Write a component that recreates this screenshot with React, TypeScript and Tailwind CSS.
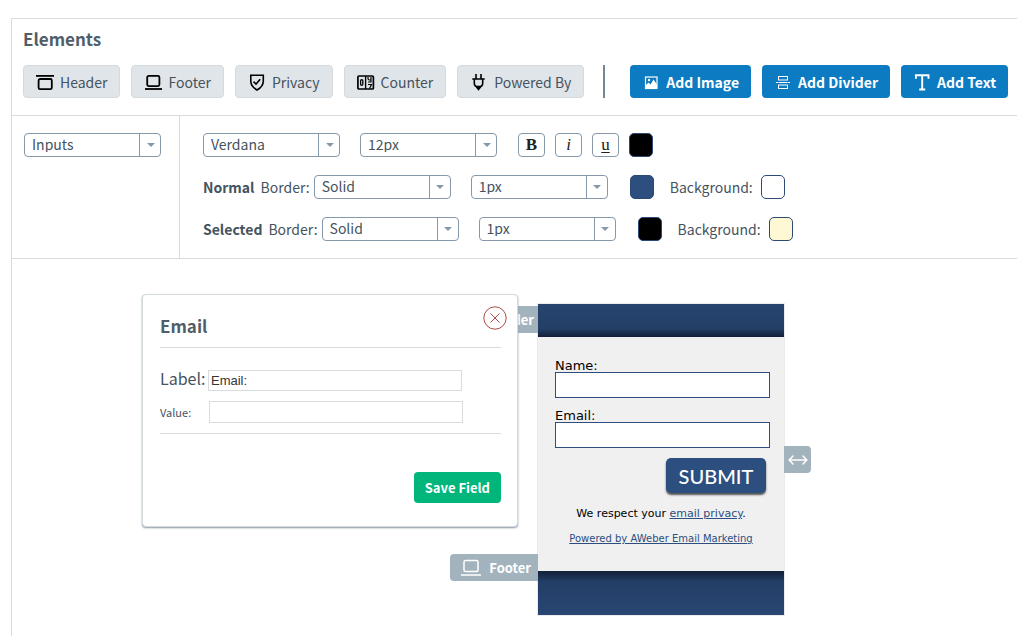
import React, { useState } from 'react';

const Icon = ({ children }: { children: React.ReactNode }) => (
  <svg width="18" height="18" viewBox="0 0 18 18" fill="none" stroke="currentColor" className="shrink-0" aria-hidden="true">
    {children}
  </svg>
);

const HeaderIcon = () => (
  <Icon>
    <path d="M0 2.900h18" strokeWidth="1.800" />
    <rect x="2.600" y="6" width="13.200" height="10.200" rx="1.500" strokeWidth="1.800" />
  </Icon>
);

const FooterIcon = () => (
  <Icon>
    <rect x="3.200" y="2.900" width="12.200" height="10.200" rx="1.500" strokeWidth="1.800" />
    <path d="M1 16h17" strokeWidth="1.800" />
  </Icon>
);

const PrivacyIcon = () => (
  <Icon>
    <path d="M2.800 2.200h12.500v5.800c0 4.500-2.500 7-6.250 9c-3.750-2-6.250-4.500-6.250-9z" strokeWidth="1.600" />
    <path d="M5.500 8.700l2.500 2.300l4.200-4.800" strokeWidth="1.600" />
  </Icon>
);

const CounterIcon = () => (
  <Icon>
    <rect x="0.900" y="3" width="15.500" height="13" rx="1" strokeWidth="1.700" />
    <path d="M8.600 3v13" strokeWidth="1.400" />
    <rect x="3.600" y="6.600" width="2.200" height="5.800" rx="1.100" strokeWidth="1.300" />
    <path d="M11 4v1.500q0 1.500 1.500 1.500h1.500V4M14 7v2h-3M11 11.500h3.500l-2 4" strokeWidth="1.200" />
  </Icon>
);

const PlugIcon = () => (
  <Icon>
    <path d="M6 1v5M11 1v5M2.300 6h12.400M4.300 6v4q0 3.500 3 3.500h2.400q3 0 3-3.500V6" strokeWidth="1.600" />
    <path d="M5.500 14h6l-3 3.800z" fill="currentColor" stroke="none" />
  </Icon>
);

const ImageIcon = () => (
  <Icon>
    <rect x="3.500" y="4" width="11.500" height="11.500" strokeWidth="1.200" />
    <path d="M3.500 12.500l3-3l2 2l3-5l3.500 5v4H3.500z" fill="currentColor" stroke="none" />
    <circle cx="7" cy="7" r="1.200" fill="currentColor" stroke="none" />
  </Icon>
);

const DividerIcon = () => (
  <Icon>
    <rect x="4.500" y="3.500" width="9" height="3.500" />
    <rect x="4.500" y="12" width="9" height="3.500" />
    <path d="M2 9.500h2M4.500 9.500h9M14 9.500h2" />
  </Icon>
);

const TextIcon = () => (
  <Icon>
    <path d="M2.900 5.800V2.300h12.600v3.500M9.200 2.300v14M6.200 16.500h6" strokeWidth="1.900" />
  </Icon>
);

const elements = [
  { label: 'Header', icon: HeaderIcon },
  { label: 'Footer', icon: FooterIcon },
  { label: 'Privacy', icon: PrivacyIcon },
  { label: 'Counter', icon: CounterIcon },
  { label: 'Powered By', icon: PlugIcon },
];

const actions = [
  { label: 'Add Image', icon: ImageIcon },
  { label: 'Add Divider', icon: DividerIcon },
  { label: 'Add Text', icon: TextIcon },
];

function Select({ label, options }: { label: string; options: string[] }) {
  return (
    <div className="relative h-6 w-[137px] shrink-0">
      <select
        aria-label={label}
        className="block h-6 w-full appearance-none rounded-[4px] border border-[#8599aa] bg-white pr-6 pb-1 pl-[7px] text-[14px] leading-5 text-[#45535e]"
      >
        {options.map(option => (
          <option key={option}>{option}</option>
        ))}
      </select>
      <span className="pointer-events-none absolute inset-y-0 right-0 flex w-[22px] items-center justify-center border-l border-[#8599aa]">
        <svg width="8" height="4" viewBox="0 0 8 4" aria-hidden="true">
          <path d="M0 0h8L4 4z" fill="#8599aa" />
        </svg>
      </span>
    </div>
  );
}

function Swatch({ label, className }: { label: string; className: string }) {
  return <button aria-label={label} className={`h-6 w-6 shrink-0 rounded-[5px] border border-[#2b4a75] ${className}`} />;
}

function BorderRow({ name, color, background }: { name: string; color: string; background: string }) {
  return (
    <div className="flex h-6 items-center">
      <strong className="mr-[6px] font-bold">{name}</strong>
      <span className="mr-1">Border:</span>
      <Select label={`${name} border style`} options={['Solid', 'Dashed', 'Dotted']} />
      <div className="w-5 shrink-0" />
      <Select label={`${name} border width`} options={['1px', '2px', '3px']} />
      <div className="w-[22px] shrink-0" />
      <Swatch label={`${name} border color`} className={color} />
      <span className="mr-2 ml-4">Background:</span>
      <Swatch label={`${name} background color`} className={background} />
    </div>
  );
}

const formatButton =
  'flex h-6 w-[27px] items-center justify-center rounded-[4px] border border-[#8599aa] bg-white font-["Liberation_Serif",serif] text-[17px] leading-5 text-[#222]';

function FieldDialog() {
  const [label, setLabel] = useState('Email:');
  const [value, setValue] = useState('');

  return (
    <div
      role="dialog"
      aria-label="Email"
      className="relative z-10 h-[233px] w-[376px] shrink-0 rounded-[4px] border border-[#d5dbdf] bg-white pr-4 pl-[17px] shadow-[0_1px_2px_#8797a3]"
    >
      <button aria-label="Close" className="absolute top-[11px] right-[10px]">
        <svg width="24" height="24" viewBox="0 0 24 24" fill="none" stroke="#b04a4a" aria-hidden="true">
          <circle cx="12" cy="12" r="11.200" />
          <path d="M7.500 7.500l9 9M16.500 7.500l-9 9" />
        </svg>
      </button>
      <h2 className="border-b border-[#d9dcde] pt-[17px] pb-2 text-[17px] leading-[27px] font-bold text-[#4f5e69]">Email</h2>
      <div className="mt-[22px] flex items-start">
        <label htmlFor="field-label" className="w-12 shrink-0 text-[16px] leading-4">Label:</label>
        <input
          id="field-label"
          value={label}
          onChange={e => setLabel(e.target.value)}
          className="h-[21px] w-[254px] border border-[#d9dcde] px-[2px] font-['Liberation_Sans',sans-serif] text-[13px] text-[#333]"
        />
      </div>
      <div className="mt-[10px] flex items-center border-b border-[#d9dcde] pb-[10px]">
        <label htmlFor="field-value" className="w-[49px] shrink-0 text-[11px] leading-5">Value:</label>
        <input
          id="field-value"
          value={value}
          onChange={e => setValue(e.target.value)}
          className="h-[22px] w-[254px] border border-[#d9dcde] px-[2px] font-['Liberation_Sans',sans-serif] text-[13px] text-[#333]"
        />
      </div>
      <div className="mt-[38px] flex justify-end">
        <button className="h-[31px] rounded-[4px] bg-[#00b67a] px-[11px] text-[13px] leading-5 font-bold text-white">Save Field</button>
      </div>
    </div>
  );
}

function FormPreview() {
  return (
    <div className="relative mt-[9px] w-[248px] shrink-0 border border-[#ebebeb] font-['DejaVu_Sans',sans-serif] text-black">
      <button className="absolute top-[2px] right-full flex h-[27px] items-center gap-2 rounded-l-[4px] bg-[#a3b3be] pr-1 pl-3 font-['Noto_Sans_CJK_SC',sans-serif] text-[13px] font-bold text-white">
        <HeaderIcon />
        Header
      </button>
      <button className="absolute top-[250px] right-full flex h-[27px] items-center gap-2 rounded-l-[4px] bg-[#a3b3be] pr-[7px] pl-[11px] font-['Noto_Sans_CJK_SC',sans-serif] text-[13px] font-bold text-white">
        <svg width="20" height="18" viewBox="0 0 20 18" fill="none" stroke="currentColor" aria-hidden="true">
          <rect x="3" y="1.500" width="14" height="11" rx="1.500" strokeWidth="1.500" />
          <path d="M0 16h20" strokeWidth="1.500" />
        </svg>
        Footer
      </button>
      <button aria-label="Resize" className="absolute top-[142px] left-full flex h-[27px] w-[27px] items-center justify-center rounded-r-[4px] bg-[#a3b3be]">
        <svg width="20" height="12" viewBox="0 0 20 12" fill="none" stroke="white" strokeWidth="1.500" strokeLinecap="round" aria-hidden="true">
          <path d="M1.500 6h17M5 2L1.200 6l3.800 4M15 2l3.800 4l-3.800 4" />
        </svg>
      </button>
      <div className="h-[33px] bg-linear-to-b from-[#27446f] via-[#233f67] via-75% to-[#122039]" />
      <div className="h-[234px] bg-[#f0f0f0] pt-[23px] pr-[14px] pl-[17px]">
        <label htmlFor="preview-name" className="block text-[13px] leading-3">Name:</label>
        <input id="preview-name" className="block h-[26px] w-full border border-[#2c4f7f] bg-white px-1 text-[13px]" />
        <label htmlFor="preview-email" className="mt-3 block text-[13px] leading-3">Email:</label>
        <input id="preview-email" className="block h-[26px] w-full border border-[#2c4f7f] bg-white px-1 text-[13px]" />
        <div className="mt-[10px] mr-1 flex justify-end">
          <button className="h-[35px] w-[100px] rounded-[5px] bg-[#2c4f7f] font-['Lato',sans-serif] text-[20px] leading-8 font-medium text-white shadow-[0_2px_2px_#555]">
            SUBMIT
          </button>
        </div>
        <p className="mt-[14px] pr-[3px] text-center text-[11px] leading-[14px]">
          We respect your <a href="#privacy" className="text-[#2c4f7f] underline">email privacy</a>.
        </p>
        <p className="mt-[11px] pr-[3px] text-center text-[10px] leading-[14px]">
          <a href="#aweber" className="text-[#2c4f7f] underline">Powered by AWeber Email Marketing</a>
        </p>
      </div>
      <div className="h-11 bg-linear-to-b from-[#122039] via-[#233f67] via-25% to-[#294672]" />
    </div>
  );
}

export default function App() {
  return (
    <div className="flex min-h-screen flex-col overflow-x-hidden bg-white pt-[18px] pl-[11px] font-['Noto_Sans_CJK_SC',sans-serif] text-[14px] leading-5 text-[#45535e]">
      <main className="flex grow flex-col border-t border-l border-[#d9dcde]">
        <header className="border-b border-[#d9dcde] pt-2 pr-2 pb-[17px] pl-[11px]">
          <h1 className="text-[17px] leading-6 font-bold text-[#4f5e69]">Elements</h1>
          <div className="mt-[14px] flex items-center gap-[11px]">
            {elements.map(({ label, icon: ElementIcon }) => (
              <button
                key={label}
                className="flex h-[33px] items-center gap-[6px] rounded-[4px] border border-[#d5d9dc] bg-[#e0e5e9] px-3 whitespace-nowrap"
              >
                <span className="text-black"><ElementIcon /></span>
                {label}
              </button>
            ))}
            <div className="mr-[14px] ml-2 h-[33px] w-[2px] shrink-0 bg-[#6f8799]" />
            {actions.map(({ label, icon: ActionIcon }) => (
              <button
                key={label}
                className="flex h-[33px] items-center gap-[6px] rounded-[4px] bg-[#0c7bc1] px-3 font-bold whitespace-nowrap text-white"
              >
                <ActionIcon />
                {label}
              </button>
            ))}
          </div>
        </header>

        <section className="flex border-b border-[#d9dcde]">
          <div className="w-[168px] shrink-0 border-r border-[#d9dcde] pt-[17px] pl-3">
            <Select label="Element type" options={['Inputs', 'Labels', 'Text']} />
          </div>
          <div className="flex flex-col gap-[18px] pt-[17px] pb-[17px] pl-[23px]">
            <div className="flex items-center">
              <Select label="Font" options={['Verdana', 'Arial', 'Georgia']} />
              <div className="w-5 shrink-0" />
              <Select label="Font size" options={['12px', '14px', '16px']} />
              <div className="ml-[21px] flex gap-[10px]">
                <button aria-label="Bold" className={`${formatButton} font-bold`}>B</button>
                <button aria-label="Italic" className={`${formatButton} italic`}>i</button>
                <button aria-label="Underline" className={`${formatButton} underline underline-offset-2`}>u</button>
                <Swatch label="Font color" className="bg-black" />
              </div>
            </div>
            <BorderRow name="Normal" color="bg-[#2c4f7f]" background="bg-white" />
            <BorderRow name="Selected" color="bg-black" background="bg-[#fff8d5]" />
          </div>
        </section>

        <section className="flex items-start gap-[19px] pt-[35px] pb-5 pl-[130px]">
          <FieldDialog />
          <FormPreview />
        </section>
      </main>
    </div>
  );
}
